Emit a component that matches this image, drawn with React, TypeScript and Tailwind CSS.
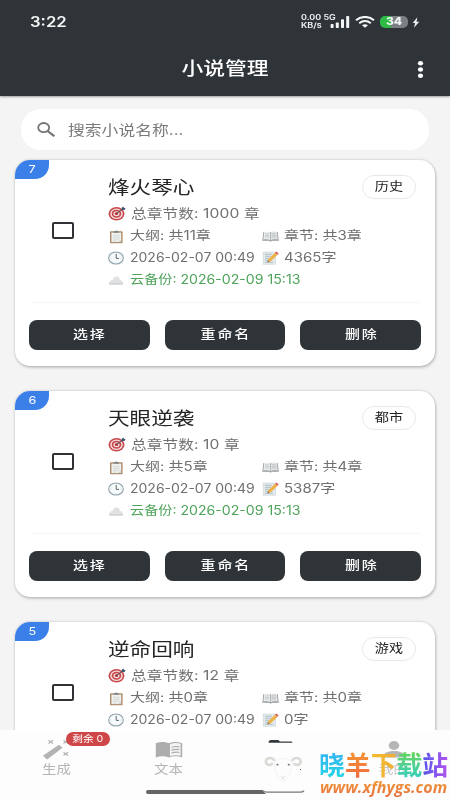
import type { ReactNode } from "react";

type Novel = {
  index: number;
  title: string;
  tag: string;
  total: number;
  outline: number;
  chapters: number;
  updated: string;
  words: number;
  backup?: string;
};

const novels: Novel[] = [
  {
    index: 7,
    title: "烽火琴心",
    tag: "历史",
    total: 1000,
    outline: 11,
    chapters: 3,
    updated: "2026-02-07 00:49",
    words: 4365,
    backup: "2026-02-09 15:13",
  },
  {
    index: 6,
    title: "天眼逆袭",
    tag: "都市",
    total: 10,
    outline: 5,
    chapters: 4,
    updated: "2026-02-07 00:49",
    words: 5387,
    backup: "2026-02-09 15:13",
  },
  {
    index: 5,
    title: "逆命回响",
    tag: "游戏",
    total: 12,
    outline: 0,
    chapters: 0,
    updated: "2026-02-07 00:49",
    words: 0,
  },
];

function TargetIcon() {
  return (
    <svg className="w-[18px] h-[15px] shrink-0" viewBox="0 0 18 15" fill="none">
      <ellipse cx="8.5" cy="7.7" rx="8" ry="6.8" fill="#c8474b" />
      <ellipse cx="8.5" cy="7.7" rx="6.3" ry="5.3" fill="#f3dcdc" />
      <ellipse cx="8.5" cy="7.7" rx="4.8" ry="4" fill="#c8474b" />
      <ellipse cx="8.5" cy="7.7" rx="3.1" ry="2.5" fill="#f3dcdc" />
      <ellipse cx="8.5" cy="7.7" rx="1.7" ry="1.4" fill="#b93439" />
      <path d="M8.5 7.5 14.5 3.2" stroke="#4a4f58" strokeWidth="1" />
      <path d="m13.4 4 .5-2.6L15.6.5l.3 1.4 1.7.2-1.1 1.8Z" fill="#3c5870" />
    </svg>
  );
}

function ClipboardIcon() {
  return (
    <svg className="w-[16px] h-[14px] shrink-0" viewBox="0 0 16 14" fill="none">
      <rect x="2" y="1.3" width="12.6" height="12" rx="1" fill="#ad8a68" />
      <rect x="3.4" y="2.6" width="9.8" height="9.5" fill="#eef1ee" />
      <path d="M5.8 2.7V1.3h1.4a1.2 1.2 0 0 1 2.3 0h1.3v1.4Z" fill="#7d8587" />
      <path d="M5 5.3h6.6M5 7.2h6.6M5 9.1h6.6M5 11h3.5" stroke="#c6cbc7" strokeWidth=".6" />
      <path d="m10.2 12.1 3-2.6v2.6Z" fill="#c9cec9" />
    </svg>
  );
}

function ClockIcon() {
  return (
    <svg className="w-[16px] h-[14px] shrink-0" viewBox="0 0 16 14" fill="none">
      <ellipse cx="8" cy="7" rx="7.3" ry="6" fill="#f7fafa" stroke="#8ea3ac" strokeWidth="1.1" />
      <path d="M8.2 3v4.4H11" stroke="#5c686e" strokeWidth="1" />
      <path d="M8 1.9v.8M8 11.3v.8M2.4 7h1M12.6 7h1" stroke="#b4c1c7" strokeWidth=".6" />
    </svg>
  );
}

function CloudIcon() {
  return (
    <svg className="w-[16px] h-[14px] shrink-0" viewBox="0 0 16 14" fill="none">
      <path d="M2.6 11.6C.5 11.4.3 9 2.4 8.5c0-1.3 1.2-1.9 2.3-1.5C5 4.6 6.5 3.4 8.5 3.500c2 .1 3.300 1.500 3.400 3.400 1.600 0 2.300.7 2.200 1.800 1.800.5 1.600 2.700-.4 2.900Z" fill="#e0e1e2" />
      <path d="M2.6 11.6c-1.2-.1-1.8-.8-1.700-1.600 1.800 1 4.500.5 6.400.2 3 .5 5.800.4 7.800-.3 0 .8-.5 1.600-1.400 1.700Z" fill="#c8cacc" />
    </svg>
  );
}

function BookIcon() {
  return (
    <svg className="w-[17px] h-[13px] shrink-0" viewBox="0 0 17 13" fill="none">
      <path d="M.3 10.8 1.4 2h14.3l1.1 8.8H9.8l-1.3.9-1.3-.9Z" fill="#969b9e" />
      <path d="M1.3 9.8 2.2 2C4.8 1 7 1.3 8.5 2.4v8C6.4 9.1 4 9.2 1.3 9.8Z" fill="#eceeee" />
      <path d="M15.8 9.8 14.9 2C12.3 1 10 1.3 8.5 2.4v8c2.1-1.3 4.6-1.2 7.3-.6Z" fill="#e1e4e4" />
      <path d="M3.2 3.8h4M3 5.4h4.2M2.8 7h4.4M9.8 3.8h4M9.8 5.4H14M9.8 7h4.3" stroke="#b6bbbd" strokeWidth=".7" />
      <path d="M8.5 2.4v8.3" stroke="#9a9fa1" strokeWidth=".6" />
    </svg>
  );
}

function MemoIcon() {
  return (
    <svg className="w-[17px] h-[14px] shrink-0" viewBox="0 0 17 14" fill="none">
      <path d="M1.2 1h12.3v12.3H1.2Z" fill="#e3eaec" stroke="#c0cbd0" strokeWidth=".5" />
      <path d="M3 3.3h7M3 5.3h6M3 7.3h4M3 9.3h3M3 11.3h8" stroke="#9aacb6" strokeWidth=".7" />
      <path d="m5.6 11.2.8-3L13 1.7l2.6 2-6.7 6.6Z" fill="#eeb145" />
      <path d="m13 1.7 1.3-1.2 2.4 1.9-1.1 1.3Z" fill="#d85a5c" />
      <path d="m5.6 11.2.4-1.6 1.3 1Z" fill="#504840" />
    </svg>
  );
}

// Wide label text: the glyphs are drawn broader than they are tall.
function Wide({ children, className = "" }: { children: ReactNode; className?: string }) {
  return (
    <span className={`inline-block origin-left scale-x-[1.2] whitespace-nowrap ${className}`}>
      {children}
    </span>
  );
}

function StatusBar() {
  return (
    <div className="flex h-[43px] items-center pt-px pl-[30px] pr-[30px] text-[#f4f5f5]">
      <span className="origin-left scale-x-[1.15] text-[14.5px] font-semibold">3:22</span>
      <div className="ml-auto flex items-center">
        <div className="w-[41px] text-[7.5px] leading-[8px] font-semibold">
          <div className="origin-left scale-x-[1.2] whitespace-nowrap">0.00 5G</div>
          <div className="origin-left scale-x-[1.2]">KB/s</div>
        </div>
        <svg className="-ml-[12px] h-[12px] w-[20px]" viewBox="0 0 20 12" fill="#f4f5f5">
          <rect x="0.6" y="8" width="3" height="4" rx=".8" />
          <rect x="5.8" y="6.4" width="3" height="5.6" rx=".8" />
          <rect x="11" y="3.2" width="3" height="8.8" rx=".8" />
          <rect x="16.2" y="0" width="3" height="12" rx=".8" />
        </svg>
        <svg className="ml-[5px] h-[12px] w-[20px]" viewBox="0 0 20 12" fill="none" stroke="#f4f5f5" strokeWidth="2">
          <path d="M1 4.3C6.2-.2 13.8-.2 19 4.3" />
          <path d="M4.2 7.2c3.5-2.8 8.1-2.8 11.6 0" />
          <path d="M7 9.2c1.8-1.4 4.2-1.4 6 0l-3 2.6Z" fill="#f4f5f5" stroke="none" />
        </svg>
        <div className="ml-[5px] flex h-[12px] w-[28px] items-center justify-center rounded-[5px] bg-linear-to-r from-[#2dbb45] from-38% to-[#7b8082] to-38% text-[10.5px] font-extrabold">
          <span className="scale-x-[1.15]">34</span>
        </div>
        <svg className="ml-[4px] h-[11px] w-[8px]" viewBox="0 0 8 11" fill="#eceded">
          <path d="M5.4.3.6 5.9h2.5L2 10.8l5.3-6H4.6Z" />
        </svg>
      </div>
    </div>
  );
}

function Header() {
  return (
    <header className="h-[96px] shrink-0 bg-[#2e3438] shadow-[0_1px_2px_rgba(0,0,0,0.35)]">
      <StatusBar />
      <div className="grid grid-cols-[1fr_auto_1fr] items-center pt-[13px]">
        <h1 className="col-start-2 scale-x-[1.21] text-[18px] leading-[26px] font-medium text-white">
          小说管理
        </h1>
        <svg className="mr-[26px] h-[17px] w-[7px] justify-self-end" viewBox="0 0 7 17" fill="#fff">
          <ellipse cx="3.5" cy="2.3" rx="2.6" ry="2.2" />
          <ellipse cx="3.5" cy="8.5" rx="2.6" ry="2.2" />
          <ellipse cx="3.5" cy="14.7" rx="2.6" ry="2.2" />
        </svg>
      </div>
    </header>
  );
}

function SearchBar() {
  return (
    <div className="mx-[21px] mt-[13px] flex h-[41px] items-center rounded-[20px] bg-white pl-[16px] text-[#7a7a7a]">
      <svg className="h-[15px] w-[19px]" viewBox="0 0 19 15" fill="none" stroke="#747474">
        <ellipse cx="6.7" cy="5.6" rx="5.5" ry="4.600" strokeWidth="1.8" />
        <path d="m10.600 9 6.700 5.200" strokeWidth="2.200" />
      </svg>
      <Wide className="ml-[12px] text-[14px]">搜索小说名称...</Wide>
    </div>
  );
}

function NovelCard({ novel }: { novel: Novel }) {
  return (
    <article className="h-[206px] shrink-0 overflow-hidden rounded-[15px] bg-white shadow-[0_0_2px_1px_rgba(0,0,0,0.1),1px_2px_3px_rgba(0,0,0,0.16)]">
      <div className="flex h-[142px]">
        <div className="w-[93px] shrink-0">
          <div className="flex h-[19px] w-[34px] items-center justify-center rounded-br-[14px] bg-[#3b80e8] text-[11px] text-white">
            <span className="scale-x-[1.15]">{novel.index}</span>
          </div>
          <div className="mt-[43px] ml-[37px] h-[17px] w-[22px] rounded-[2px] border-2 border-[#303236]" />
        </div>
        <div className="flex-1 pt-[15px] text-[13px] text-[#707070]">
          <div className="flex h-[26px] items-start justify-between pr-[19px]">
            <h2 className="leading-[25px]">
              <Wide className="text-[18px] text-[#242424]">{novel.title}</Wide>
            </h2>
            <span className="flex h-[24px] w-[54px] items-center justify-center rounded-full border border-[#e8e8e8] text-[12px] text-[#222]">
              <span className="scale-x-[1.18]">{novel.tag}</span>
            </span>
          </div>
          <div className="flex h-[25px] items-center gap-[5px]">
            <TargetIcon />
            <Wide className="tracking-[0.1px]">总章节数: {novel.total} 章</Wide>
          </div>
          <div className="grid h-[21px] grid-cols-[154px_1fr] items-center text-[12.5px]">
            <div className="flex items-center gap-[6px]">
              <ClipboardIcon />
              <Wide>大纲: 共{novel.outline}章</Wide>
            </div>
            <div className="flex items-center gap-[5px]">
              <BookIcon />
              <Wide>章节: 共{novel.chapters}章</Wide>
            </div>
          </div>
          <div className="grid h-[22px] grid-cols-[154px_1fr] items-center text-[12.5px]">
            <div className="flex items-center gap-[6px]">
              <ClockIcon />
              <span className="origin-left scale-x-[1.12] whitespace-nowrap">{novel.updated}</span>
            </div>
            <div className="flex items-center gap-[5px]">
              <MemoIcon />
              <Wide>{novel.words}字</Wide>
            </div>
          </div>
          {novel.backup && (
            <div className="flex h-[22px] items-center gap-[6px] text-[12.5px] text-[#4ea35a]">
              <CloudIcon />
              <span className="origin-left scale-x-[1.13] whitespace-nowrap">
                云备份: {novel.backup}
              </span>
            </div>
          )}
        </div>
      </div>
      <div className="mx-[15px] border-t border-[#f6f6f6]" />
      <div className="mx-[14px] mt-[17px] grid grid-cols-3 gap-[15px]">
        {["选择", "重命名", "删除"].map((label) => (
          <button
            key={label}
            className="flex h-[30px] items-center justify-center rounded-[8px] bg-[#2e3438] text-[12.5px] font-medium tracking-[1.6px] text-white"
          >
            <span className="scale-x-[1.2] pl-[1.6px]">{label}</span>
          </button>
        ))}
      </div>
    </article>
  );
}

function BottomNav() {
  return (
    <nav className="relative grid h-[70px] shrink-0 grid-cols-4 bg-[#fdfdfd] pt-[8px] text-[12.5px] text-[#b5b5b5]">
      <div className="flex flex-col items-center">
        <svg className="h-[22px] w-[28px]" viewBox="0 0 28 22" fill="none">
          <path d="m.9 17.700 16-11 3.600 3-15.400 11.800Z" fill="#b3b3b3" />
          <path d="m6.500 2.200 4.500 3.200m0-3.200L6.500 5.400M21.500 2.200 26 5.400m0-3.200-4.500 3.200M21.500 14.200l4.500 3.200m0-3.200-4.500 3.200" stroke="#b3b3b3" strokeWidth="1.2" />
        </svg>
        <span className="scale-x-[1.15] leading-[20px]">生成</span>
      </div>
      <span className="absolute top-[2px] left-[66px] flex h-[14px] w-[44px] items-center justify-center rounded-full bg-[#cf4648] text-[9.5px] text-white">
        <span className="scale-x-[1.12] whitespace-nowrap">剩余 0</span>
      </span>
      <div className="flex flex-col items-center">
        <svg className="h-[22px] w-[28px]" viewBox="0 0 28 22" fill="none">
          <path d="M.8 5.3C5 3.4 10 3.4 14 5.3c4-1.9 9-1.9 13.2 0v14.2c-4.2-1.7-9.2-1.7-13.2 0-4-1.7-9-1.7-13.2 0Z" fill="#adadad" />
          <path d="M15 6.3c3.2-1.5 7.2-1.6 10.6-.5v11.9c-3.4-.8-7.4-.7-10.6.5Z" fill="#f4f4f4" />
          <path d="M16.4 9.3c2.7-.9 5.4-1 7.9-.5M16.4 12.1c2.7-.9 5.4-1 7.9-.5M16.4 15c2.7-.9 5.4-1 7.9-.5" stroke="#adadad" strokeWidth="1.2" />
        </svg>
        <span className="scale-x-[1.15] leading-[20px]">文本</span>
      </div>
      <div className="flex flex-col items-center">
        <svg className="h-[22px] w-[26px]" viewBox="0 0 26 22" fill="none">
          <path d="M.5 4.700Q.6 2 3 2h7.200l1.800 1.600h11.500q.9.200 1 1.100Z" fill="#33383c" />
        </svg>
      </div>
      <div className="flex flex-col items-center">
        <svg className="h-[22px] w-[24px]" viewBox="0 0 24 22" fill="#b5b5b5">
          <ellipse cx="12" cy="7.5" rx="5.3" ry="4.4" />
          <path d="M2 19.5v-2c0-6 20-6 20 0v2Z" />
        </svg>
        <span className="scale-x-[1.15] leading-[20px] text-[#c4c4c4]">我的</span>
      </div>
      <div className="absolute top-[60px] left-[146px] h-[4px] w-[158px] rounded-full bg-[#656565]" />
    </nav>
  );
}

function Watermark() {
  return (
    <div className="absolute top-[748px] left-[262px] flex">
      <svg className="h-[48px] w-[44px]" viewBox="0 0 44 48" fill="none">
        <path d="M0 0h44v48H4V46L0 42Z" fill="#fdfdfd" />
        <path d="M0 42.200q2.500 2 5 2h33q3 0 4-1.600" stroke="#777" strokeWidth="1.300" />
        <path d="M12 15C14 9 28.500 9 30.500 15 30 23 26 33 21 33S12.500 23 12 15Z" fill="#fcfcfc" stroke="#f1f1ef" strokeWidth=".8" />
        <path d="M12.600 13C10.500 8.500 4 9.500 3.800 13.500c0 4 5.700 4.500 6.700 1.300" stroke="#dcdad6" strokeWidth="2.600" />
        <path d="M30 13c2-4.500 8.500-3.500 8.700.5 0 4-5.700 4.500-6.700 1.300" stroke="#dcdad6" strokeWidth="2.600" />
        <ellipse cx="15.500" cy="16.700" rx="1.100" ry=".9" fill="#777" />
        <ellipse cx="26.800" cy="16.700" rx="1.100" ry=".9" fill="#777" />
        <path d="m18.500 28 2.400 1.900 2.400-1.900M20.900 29.900v1.600" stroke="#d8d3d1" strokeWidth=".8" />
        <circle cx="38.500" cy="21.500" r=".6" fill="#333" />
      </svg>
      <div className="ml-[13px] w-[129px]">
        <div className="flex text-[25.8px] leading-[36px] font-bold">
          <span className="bg-linear-to-b from-[#35aef5] to-[#22dce0] bg-clip-text text-transparent">晓</span>
          <span className="bg-linear-to-b from-[#f39a2d] to-[#ef6044] bg-clip-text text-transparent">羊</span>
          <span className="bg-linear-to-r from-[#f3bd2f] to-[#efad35] bg-clip-text text-transparent">下</span>
          <span className="bg-linear-to-b from-[#6bd43a] to-[#22cdd0] bg-clip-text text-transparent">载</span>
          <span className="bg-linear-to-r from-[#4d55ed] to-[#b251ed] bg-clip-text text-transparent">站</span>
        </div>
        <div className="-mt-[7px] bg-linear-to-b from-[#efa035] to-[#e8703f] bg-clip-text pl-px font-['Open_Sans'] text-[16px] leading-[20px] font-bold text-transparent italic">
          www.xfhygs.com
        </div>
      </div>
    </div>
  );
}

export default function App() {
  return (
    <div className="relative flex h-[800px] w-[450px] flex-col overflow-hidden bg-[#f4f4f5] font-[Inter,'Noto_Sans_CJK_SC',sans-serif]">
      <Header />
      <main className="min-h-0 flex-1 overflow-hidden">
        <SearchBar />
        <div className="mt-[10px] flex flex-col gap-[25px] px-[15px]">
          {novels.map((novel) => (
            <NovelCard key={novel.index} novel={novel} />
          ))}
        </div>
      </main>
      <BottomNav />
      <Watermark />
    </div>
  );
}
